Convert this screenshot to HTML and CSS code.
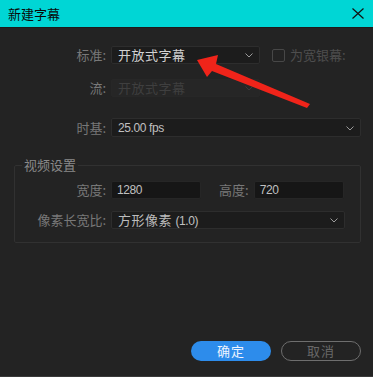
FILE: index.html
```html
<!DOCTYPE html>
<html lang="zh-CN">
<head>
<meta charset="utf-8">
<title>新建字幕</title>
<link rel="stylesheet" href="styles.css">
</head>
<body>
<div class="dialog">
  <div class="titlebar">
    <span class="title">新建字幕</span>
    <svg class="close" width="12" height="11" viewBox="0 0 12 11"><path d="M0.5 0.5 L11.5 10.5 M11.5 0.5 L0.5 10.5" stroke="#111" stroke-width="1.2" fill="none"/></svg>
  </div>
  <div class="content">
    <div class="row r1">
      <span class="label">标准:</span>
      <div class="select w149 bright"><span class="cjk">开放式字幕</span><svg class="chev" width="8" height="5" viewBox="0 0 8 5"><path d="M0.5 0.5 L4 4 L7.5 0.5" stroke="#9a9a9a" fill="none"/></svg></div>
      <span class="check"></span><span class="checklabel">为宽银幕:</span>
    </div>
    <div class="row r2">
      <span class="label">流:</span>
      <div class="select w149 disabled"><span class="cjk">开放式字幕</span><svg class="chev" width="8" height="5" viewBox="0 0 8 5"><path d="M0.5 0.5 L4 4 L7.5 0.5" stroke="#3a3a3a" fill="none"/></svg></div>
    </div>
    <div class="row r3">
      <span class="label">时基:</span>
      <div class="select wfull tall"><span class="num">25.00 fps</span><svg class="chev" width="8" height="5" viewBox="0 0 8 5"><path d="M0.5 0.5 L4 4 L7.5 0.5" stroke="#9a9a9a" fill="none"/></svg></div>
    </div>
    <fieldset class="group">
      <legend>视频设置</legend>
      <div class="row r4">
        <span class="label glabel">宽度:</span>
        <div class="input"><span class="num">1280</span></div>
        <span class="label2">高度:</span>
        <div class="input"><span class="num">720</span></div>
      </div>
      <div class="row r5">
        <span class="label glabel">像素长宽比:</span>
        <div class="select wgroup"><span class="cjk">方形像素 <span class="num">(1.0)</span></span><svg class="chev" width="8" height="5" viewBox="0 0 8 5"><path d="M0.5 0.5 L4 4 L7.5 0.5" stroke="#9a9a9a" fill="none"/></svg></div>
      </div>
    </fieldset>
    <div class="buttons">
      <button class="btn primary">确定</button>
      <button class="btn secondary">取消</button>
    </div>
  </div>
  <svg class="arrow" width="373" height="377" viewBox="0 0 373 377">
    <polygon points="197,60 218,55 216,64 310,104 307,108 212,71 207,77" fill="#f0241a"/>
  </svg>
</div>
</body>
</html>
```

FILE: styles.css
```css
html, body {
  margin: 0;
  padding: 0;
  background: #232323;
}
.dialog {
  position: relative;
  width: 373px;
  height: 377px;
  background: #232323;
  display: flex;
  flex-direction: column;
  font-family: "Noto Sans CJK SC", "Noto Sans", sans-serif;
  box-sizing: border-box;
  border-bottom: 1px solid #3a3a3a;
  overflow: hidden;
}
.titlebar {
  height: 28px;
  flex: none;
  background: #00d6d5;
  display: flex;
  align-items: center;
  justify-content: space-between;
  padding: 0 9px 0 8px;
  box-sizing: border-box;
  border-bottom: 1px solid #1b1b1b;
}
.title {
  font-size: 13px;
  color: #0a0a0a;
  line-height: 16px;
}
.close {
  display: block;
}
.content {
  flex: 1;
  display: flex;
  flex-direction: column;
  padding: 0 12px 15px 14px;
}
.row {
  display: flex;
  align-items: center;
  height: 18px;
}
.r1 { margin-top: 18px; }
.r2 { margin-top: 15px; }
.r3 { margin-top: 21px; height: 19px; }
.label {
  width: 92px;
  text-align: right;
  font-size: 13px;
  color: #787878;
  margin-right: 5px;
  flex: none;
  line-height: 18px;
}
.glabel {
  width: 91px;
}
.label2 {
  font-size: 13px;
  color: #787878;
  margin-left: 18px;
  margin-right: 5px;
  line-height: 18px;
}
.select {
  height: 18px;
  box-sizing: border-box;
  background: #1c1c1c;
  border: 1px solid #2d2d2d;
  border-radius: 2px;
  display: flex;
  align-items: center;
  justify-content: space-between;
  padding: 0 6px 0 6px;
  flex: none;
}
.tall { height: 19px; }
.w149 { width: 149px; }
.wfull { width: 250px; }
.wgroup { width: 234px; }
.cjk {
  font-size: 13px;
  letter-spacing: 0.5px;
  color: #bcbcbc;
  line-height: 16px;
}
.bright .cjk { color: #d2d2d2; }
.disabled {
  background: #262626;
  border-color: #272727;
}
.disabled .cjk { color: #3f3f3f; }
.num {
  font-family: "Liberation Sans", sans-serif;
  font-size: 12px;
  letter-spacing: -0.4px;
  color: #c0c0c0;
  line-height: 16px;
}
.chev { display: block; margin-top: 1px; }
.check {
  width: 13px;
  height: 13px;
  box-sizing: border-box;
  border: 1.5px solid #474747;
  border-radius: 2px;
  margin-left: 12px;
  flex: none;
}
.checklabel {
  font-size: 13px;
  color: #4e4e4e;
  margin-left: 5px;
  line-height: 18px;
}
.group {
  margin: 20px 0 0 0;
  padding: 8px 16px 13px 0;
  border: 1px solid #313131;
  border-radius: 2px;
  width: 347px;
  box-sizing: border-box;
  min-width: 0;
}
.group legend {
  font-size: 13px;
  line-height: 16px;
  color: #8a8a8a;
  padding: 0 2px;
  margin-left: 7px;
}
.r5 { margin-top: 12px; }
.input {
  width: 90px;
  height: 18px;
  box-sizing: border-box;
  background: #161616;
  border: 1px solid #262626;
  border-radius: 2px;
  display: flex;
  align-items: center;
  padding-left: 5px;
  flex: none;
}
.buttons {
  margin-top: auto;
  display: flex;
  justify-content: flex-end;
  gap: 10px;
}
.btn {
  width: 80px;
  height: 20px;
  border-radius: 10px;
  box-sizing: border-box;
  font-family: "Noto Sans CJK SC", sans-serif;
  font-size: 13px;
  line-height: 16px;
  padding: 0;
  letter-spacing: 1px;
}
.primary {
  background: #2d8ceb;
  border: none;
  color: #eef4ff;
}
.secondary {
  background: transparent;
  border: 1.5px solid #6e6e6e;
  color: #686868;
}
.arrow {
  position: absolute;
  left: 0;
  top: 0;
  pointer-events: none;
}
```
